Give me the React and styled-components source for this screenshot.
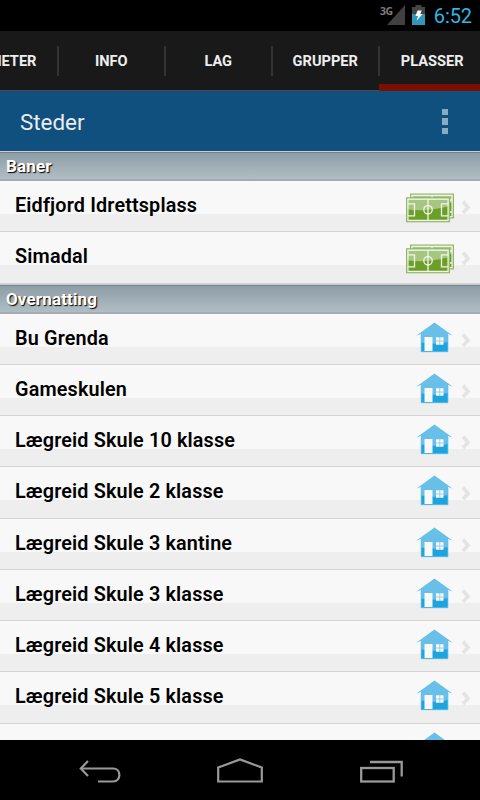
import React from "react";
import styled, { createGlobalStyle } from "styled-components";

const GlobalStyle = createGlobalStyle`
  * {
    box-sizing: border-box;
  }

  body {
    margin: 0;
    background: #000;
    font-family: Roboto, "Noto Sans", sans-serif;
  }
`;

const Screen = styled.div`
  display: flex;
  flex-direction: column;
  height: 800px;
  overflow: hidden;
  width: 480px;
`;

const StatusBar = styled.div`
  align-items: flex-start;
  background: #000;
  display: flex;
  flex: none;
  height: 31px;
  justify-content: flex-end;
  padding-right: 8px;
`;

const Clock = styled.span`
  color: #33b5e5;
  font-size: 20px;
  letter-spacing: -0.1px;
  line-height: 32px;
  margin-left: 9px;
`;

const Network = styled.span`
  color: #7d7d7d;
  font-family: "Open Sans", Roboto, sans-serif;
  font-size: 10.5px;
  font-weight: bold;
  letter-spacing: -0.4px;
  line-height: 12px;
  margin: 5px -6px 0 0;
`;

const StatusIcons = styled.div`
  display: flex;
  gap: 7px;
  padding-top: 5px;
`;

const TabBar = styled.div`
  background: #191919;
  border-bottom: 1px solid #4a4a4a;
  display: flex;
  flex: none;
  height: 60px;
  justify-content: flex-end;
`;

const Tab = styled.div`
  background: linear-gradient(#333, #333) 0 15px / 2px 30px no-repeat;
  color: #eee;
  flex: none;
  font-size: 14.6px;
  font-weight: bold;
  height: 60px;
  line-height: 61px;
  padding-left: 1.5px;
  text-align: center;
  width: 107px;

  ${({ $active }) =>
    $active &&
    `
    background: linear-gradient(#7b0f00, #7b0f00) 1px 53px / 107px 7px no-repeat,
      linear-gradient(#333, #333) 0 15px / 2px 30px no-repeat;
    margin-right: -5px;
  `}
`;

const ActionBar = styled.div`
  align-items: center;
  background: #10507f;
  color: #ececec;
  display: flex;
  flex: none;
  height: 60px;
  justify-content: space-between;
  padding: 0 32px 0 20px;
`;

const Title = styled.h1`
  font-size: 22.4px;
  font-weight: normal;
  line-height: 60px;
  margin: 0;
  padding-top: 1px;
`;

const OverflowMenu = styled.div`
  display: flex;
  flex-direction: column;
  gap: 3px;
  padding-top: 1px;
`;

const Dot = styled.span`
  background: #8aa9c2;
  height: 6.5px;
  width: 6.5px;
`;

const List = styled.div`
  background: #f8f8f8;
  border-top: 1px solid #c9ced1;
  flex: none;
  height: 589px;
  overflow: hidden;
`;

const SectionHeader = styled.div`
  background: linear-gradient(#8e9ea6, #b0bdc5);
  border-bottom: 2px solid #a3acb1;
  border-top: 1px solid #75858b;
  color: #fff;
  font-size: 17px;
  font-weight: bold;
  height: 29px;
  letter-spacing: 0.15px;
  line-height: 27px;
  padding-left: 6px;
  text-shadow: 1px 1px 1px #000;
`;

const Rows = styled.div`
  border-bottom: ${({ $closed }) => ($closed ? "1.5px solid #c9cbcb" : "none")};
`;

const Row = styled.div`
  align-items: flex-start;
  background: linear-gradient(#f8f8f8 33px, #eee 33px);
  border-bottom: 1px solid #d3d3d3;
  display: flex;
  height: 51.25px;
  padding: 0 9px 0 15px;
`;

const Name = styled.span`
  color: #000;
  flex: 1;
  font-size: 19.8px;
  font-weight: 600;
  letter-spacing: 0.16px;
  line-height: 50.5px;
`;

const RowIcon = styled.div`
  display: flex;
  margin: ${({ $top }) => $top}px 7px 0 0;
`;

const Chevron = styled.div`
  display: flex;
  margin-top: 19px;
`;

const NavBar = styled.div`
  align-items: center;
  background: #000;
  display: flex;
  flex: none;
  height: 60px;
  justify-content: center;
`;

const NavButton = styled.div`
  display: flex;
  justify-content: center;
  width: 140px;
`;

const SignalIcon = () => (
  <svg width="18" height="20" viewBox="0 0 18 20">
    <path d="M18 0V20H0Z" fill="#404040" />
  </svg>
);

const BatteryIcon = () => (
  <svg width="13" height="20" viewBox="0 0 13 20">
    <path d="M3.5 0h6v2H13v7H0V2h3.5z" fill="#444" />
    <path d="M0 9h13v11H0z" fill="#2f96bc" />
    <path d="M5.5 5.5h4.2L8.4 9h2.2L4.6 15.8 6 11H3.5z" fill="#fff" />
  </svg>
);

const PitchShape = () => (
  <>
    <rect x="0.5" y="0.5" width="43" height="24" fill="#a6c580" />
    <path d="M1 12Q18 15 43 9V24H1Z" fill="#6c9f28" />
    <rect x="0.5" y="0.5" width="43" height="24" fill="none" stroke="#90b56c" />
    <g fill="none" stroke="#f1f6e9" strokeWidth="1.3">
      <rect x="1.9" y="1.9" width="40.2" height="21.2" />
      <path d="M22 2V23M2 6.5H8.5V18.5H2M42 6.5H35.5V18.5H42" />
      <circle cx="22" cy="12.5" r="4.2" />
    </g>
  </>
);

const PitchIcon = () => (
  <svg width="48" height="30" viewBox="0 0 48 30">
    <g transform="translate(4 0.5)">
      <PitchShape />
    </g>
    <g transform="translate(0 4.3)">
      <PitchShape />
    </g>
  </svg>
);

const HouseIcon = () => (
  <svg width="38" height="31" viewBox="0 0 38 31">
    <path
      d="M18.5 0.5 36.5 13.5 32 12V30H5V12L0.5 13.5Z"
      fill="#68bfe8"
    />
    <path d="M5 20.5Q20 23 32 20V29.7H5Z" fill="#1da4df" />
    <path
      d="M5.2 13V29.7H31.9V13"
      fill="none"
      stroke="#63bfe8"
      strokeWidth="0.8"
    />
    <path d="M8.5 15H16.5V29H8.5ZM20 15.3H27.5V22.8H20Z" fill="#f8f8f8" />
    <path d="M23.75 15V23M20 19H27.5" stroke="#8acdee" strokeWidth="0.9" />
  </svg>
);

const ChevronIcon = () => (
  <svg width="10" height="15" viewBox="0 0 10 15">
    <path
      d="M2 1.5 7 7.5 2 13"
      fill="none"
      stroke="#e4e4e6"
      strokeWidth="3.6"
    />
  </svg>
);

const BackIcon = () => (
  <svg width="42" height="28" viewBox="0 0 42 28">
    <g fill="none" stroke="#999" strokeWidth="2.2">
      <path d="M2 12.5H34C42.5 12.5 42.5 25.5 34 25.5H19" />
      <path d="M9 5 1.8 12.5 9 20" />
    </g>
  </svg>
);

const HomeIcon = () => (
  <svg width="46" height="26" viewBox="0 0 46 26">
    <path
      d="M1.2 24.5V10.5L23 2.5 44.8 10.5V24.5Z"
      fill="none"
      stroke="#999"
      strokeWidth="2.2"
    />
  </svg>
);

const RecentIcon = () => (
  <svg width="48" height="28" viewBox="0 0 48 28">
    <g fill="none" stroke="#999" strokeWidth="2.3">
      <rect x="5.2" y="12" width="32.5" height="13.5" />
      <path d="M14 6H45.7V20.5" />
    </g>
  </svg>
);

const tabs = ["NYHETER", "INFO", "LAG", "GRUPPER", "PLASSER"];

const fields = ["Eidfjord Idrettsplass", "Simadal"];

const lodgings = [
  "Bu Grenda",
  "Gameskulen",
  "Lægreid Skule 10 klasse",
  "Lægreid Skule 2 klasse",
  "Lægreid Skule 3 kantine",
  "Lægreid Skule 3 klasse",
  "Lægreid Skule 4 klasse",
  "Lægreid Skule 5 klasse",
  "",
];

const Place = ({ name, icon, top }) => (
  <Row>
    <Name>{name}</Name>
    <RowIcon $top={top}>{icon}</RowIcon>
    <Chevron>
      <ChevronIcon />
    </Chevron>
  </Row>
);

const App = () => {
  return (
    <Screen>
      <GlobalStyle />
      <StatusBar>
        <Network>3G</Network>
        <StatusIcons>
          <SignalIcon />
          <BatteryIcon />
        </StatusIcons>
        <Clock>6:52</Clock>
      </StatusBar>
      <TabBar>
        {tabs.map((tab) => (
          <Tab key={tab} $active={tab === "PLASSER"}>
            {tab}
          </Tab>
        ))}
      </TabBar>
      <ActionBar>
        <Title>Steder</Title>
        <OverflowMenu>
          <Dot />
          <Dot />
          <Dot />
        </OverflowMenu>
      </ActionBar>
      <List>
        <SectionHeader>Baner</SectionHeader>
        <Rows $closed>
          {fields.map((name) => (
            <Place key={name} name={name} icon={<PitchIcon />} top={12} />
          ))}
        </Rows>
        <SectionHeader>Overnatting</SectionHeader>
        <Rows>
          {lodgings.map((name) => (
            <Place key={name} name={name} icon={<HouseIcon />} top={8} />
          ))}
        </Rows>
      </List>
      <NavBar>
        <NavButton>
          <BackIcon />
        </NavButton>
        <NavButton>
          <HomeIcon />
        </NavButton>
        <NavButton>
          <RecentIcon />
        </NavButton>
      </NavBar>
    </Screen>
  );
};

export default App;
